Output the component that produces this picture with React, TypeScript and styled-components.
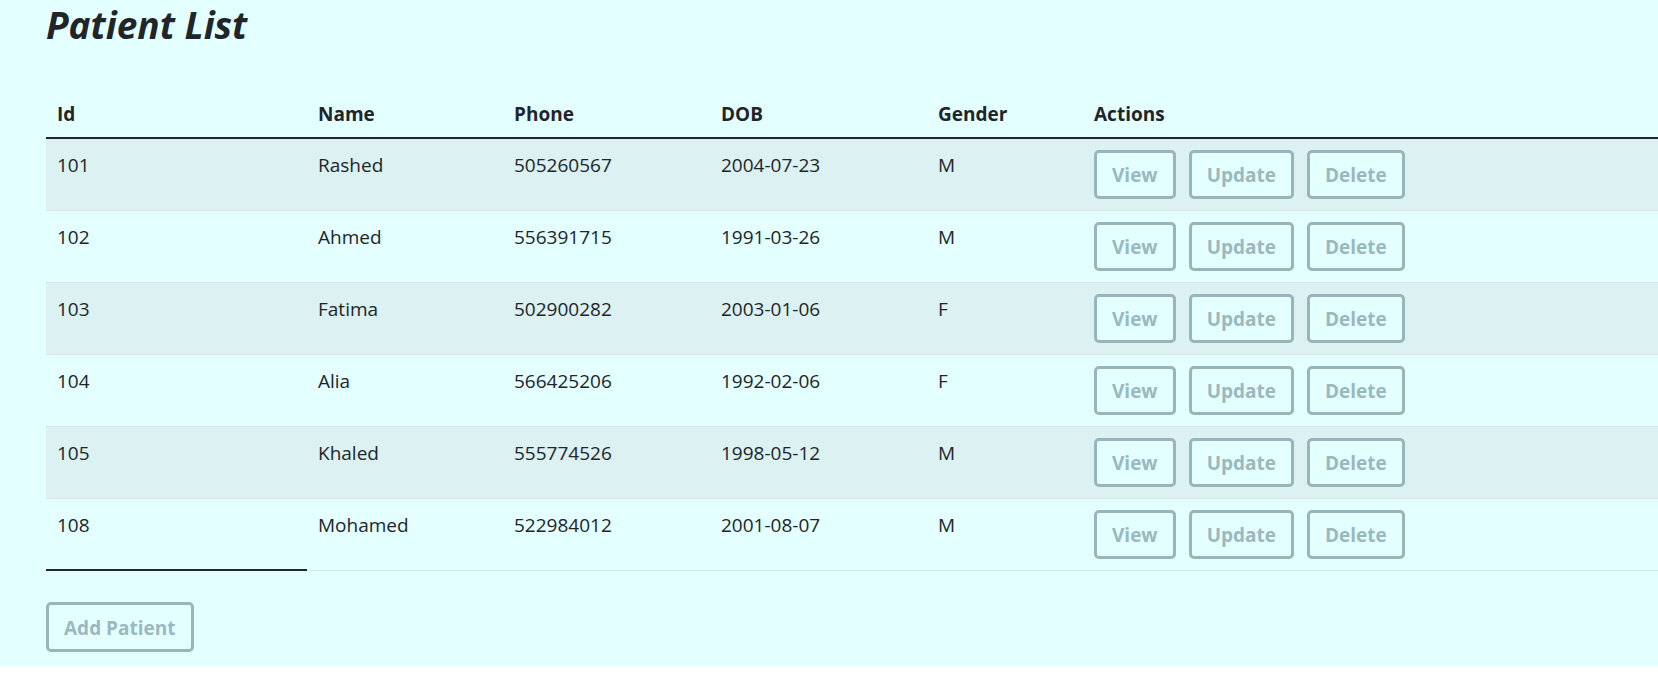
import React from "react";
import styled, { createGlobalStyle } from "styled-components";

const GlobalStyle = createGlobalStyle`
  html, body {
    margin: 0;
    padding: 0;
    background: #ffffff;
  }
  * { box-sizing: border-box; }
`;

const Page = styled.div`
  background: #e4ffff;
  padding: 0 0 14px 46px;
  font-family: "Open Sans", "Noto Sans", sans-serif;
  font-size: 19px;
  color: #212529;
`;

const Title = styled.h1`
  margin: 0 0 36px 0;
  font-size: 37px;
  line-height: 50px;
  font-weight: 700;
  font-style: italic;
  color: #212529;
`;

const Table = styled.table`
  width: 100%;
  table-layout: fixed;
  border-collapse: separate;
  border-spacing: 0;
  margin-bottom: 31px;
`;

const Col = styled.col<{ $w?: number }>`
  width: ${(p) => (p.$w ? `${p.$w}px` : "auto")};
`;

const HeadCell = styled.th`
  text-align: left;
  font-weight: 700;
  line-height: 30px;
  padding: 13px 11px 8px 11px;
  border-bottom: 2px solid #212529;
  vertical-align: top;
`;

const Row = styled.tr<{ $striped: boolean }>`
  background: ${(p) => (p.$striped ? "#dcf1f1" : "transparent")};
`;

const Cell = styled.td<{ $dark?: boolean }>`
  line-height: 30px;
  padding: 11px;
  vertical-align: top;
  border-bottom: ${(p) => (p.$dark ? "2px solid #212529" : "1px solid #dde3e6")};
`;

const Actions = styled.div`
  display: flex;
  gap: 13px;
`;

const Footer = styled.div`
  display: flex;
`;

const Button = styled.button<{ $tall?: boolean }>`
  display: block;
  font-family: "Open Sans", "Noto Sans", sans-serif;
  font-size: 19px;
  font-weight: 700;
  line-height: ${(p) => (p.$tall ? "32px" : "31px")};
  padding: 7px 15px 5px 15px;
  background: #e4ffff;
  color: #9ab8be;
  border: 3px solid #98b5bc;
  border-radius: 5px;
  cursor: pointer;
`;

type Patient = {
  id: number;
  name: string;
  phone: string;
  dob: string;
  gender: string;
};

const patients: Patient[] = [
  { id: 101, name: "Rashed", phone: "505260567", dob: "2004-07-23", gender: "M" },
  { id: 102, name: "Ahmed", phone: "556391715", dob: "1991-03-26", gender: "M" },
  { id: 103, name: "Fatima", phone: "502900282", dob: "2003-01-06", gender: "F" },
  { id: 104, name: "Alia", phone: "566425206", dob: "1992-02-06", gender: "F" },
  { id: 105, name: "Khaled", phone: "555774526", dob: "1998-05-12", gender: "M" },
  { id: 108, name: "Mohamed", phone: "522984012", dob: "2001-08-07", gender: "M" },
];

export default function App() {
  return (
    <>
      <GlobalStyle />
      <Page>
        <Title>Patient List</Title>
        <Table>
          <colgroup>
            <Col $w={261} />
            <Col $w={196} />
            <Col $w={207} />
            <Col $w={217} />
            <Col $w={156} />
            <Col />
          </colgroup>
          <thead>
            <tr>
              <HeadCell>Id</HeadCell>
              <HeadCell>Name</HeadCell>
              <HeadCell>Phone</HeadCell>
              <HeadCell>DOB</HeadCell>
              <HeadCell>Gender</HeadCell>
              <HeadCell>Actions</HeadCell>
            </tr>
          </thead>
          <tbody>
            {patients.map((p, i) => {
              const last = i === patients.length - 1;
              return (
                <Row key={p.id} $striped={i % 2 === 0}>
                  <Cell $dark={last}>{p.id}</Cell>
                  <Cell>{p.name}</Cell>
                  <Cell>{p.phone}</Cell>
                  <Cell>{p.dob}</Cell>
                  <Cell>{p.gender}</Cell>
                  <Cell>
                    <Actions>
                      <Button>View</Button>
                      <Button>Update</Button>
                      <Button>Delete</Button>
                    </Actions>
                  </Cell>
                </Row>
              );
            })}
          </tbody>
        </Table>
        <Footer>
          <Button $tall>Add Patient</Button>
        </Footer>
      </Page>
    </>
  );
}
